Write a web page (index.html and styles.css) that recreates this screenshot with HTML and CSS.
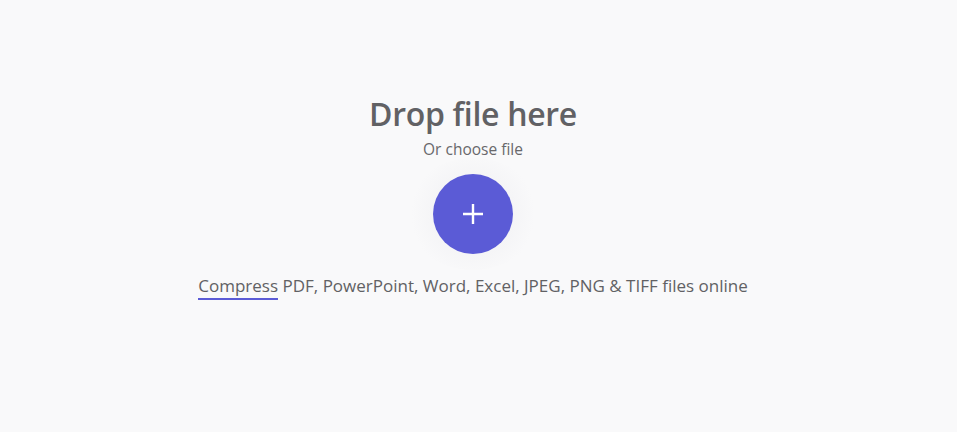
FILE: index.html
```html
<!DOCTYPE html>
<html lang="en">
<head>
  <meta charset="UTF-8" />
  <meta name="viewport" content="width=device-width, initial-scale=1.0"/>
  <title>Compress files</title>
  <link rel="stylesheet" href="styles.css">
</head>
<body>
  <main class="dropzone">
    <h1 class="drop-title">Drop file here</h1>
    <p class="drop-sub">Or choose file</p>
    <div class="halo">
      <button class="add-btn" aria-label="Choose file">
        <svg width="24" height="24" viewBox="0 0 24 24">
          <path d="M12 2v20M2 12h20" stroke="#fff" stroke-width="2.4" fill="none"/>
        </svg>
      </button>
    </div>
    <p class="tagline"><a href="#" class="tag-link">Compress</a> PDF, PowerPoint, Word, Excel, JPEG, PNG &amp; TIFF files online</p>
  </main>
</body>
</html>
```
FILE: styles.css
```css
body {
  margin: 0;
  padding: 0;
  background-color: #f9f9fa;
  font-family: "Open Sans", Lato, sans-serif;
  color: #616164;
}
.dropzone {
  display: flex;
  flex-direction: column;
  align-items: center;
  padding: 92px 11px 0 0;
  height: 432px;
  box-sizing: border-box;
}
.drop-title {
  margin: 0;
  font-size: 32px;
  font-weight: 600;
  line-height: 44px;
  letter-spacing: -0.3px;
  color: #616164;
}
.drop-sub {
  margin: 3px 0 0;
  font-size: 15.5px;
  line-height: 20px;
  color: #68686b;
}
.halo {
  margin-top: -1px;
  width: 136px;
  height: 112px;
  border-radius: 50%;
  background: radial-gradient(circle, #f4f4f6 40%, #f9f9fa 70%);
  display: flex;
  align-items: center;
  justify-content: center;
}
.add-btn {
  width: 80px;
  height: 80px;
  border-radius: 50%;
  border: none;
  background-color: #5b5bd6;
  display: flex;
  align-items: center;
  justify-content: center;
  cursor: pointer;
  padding: 0;
}
.tagline {
  margin: 5px 0 0;
  font-size: 17px;
  line-height: 22px;
  color: #616164;
}
.tag-link {
  color: inherit;
  text-decoration: none;
  border-bottom: 2px solid #5b5bd6;
  padding-bottom: 1px;
}
```
